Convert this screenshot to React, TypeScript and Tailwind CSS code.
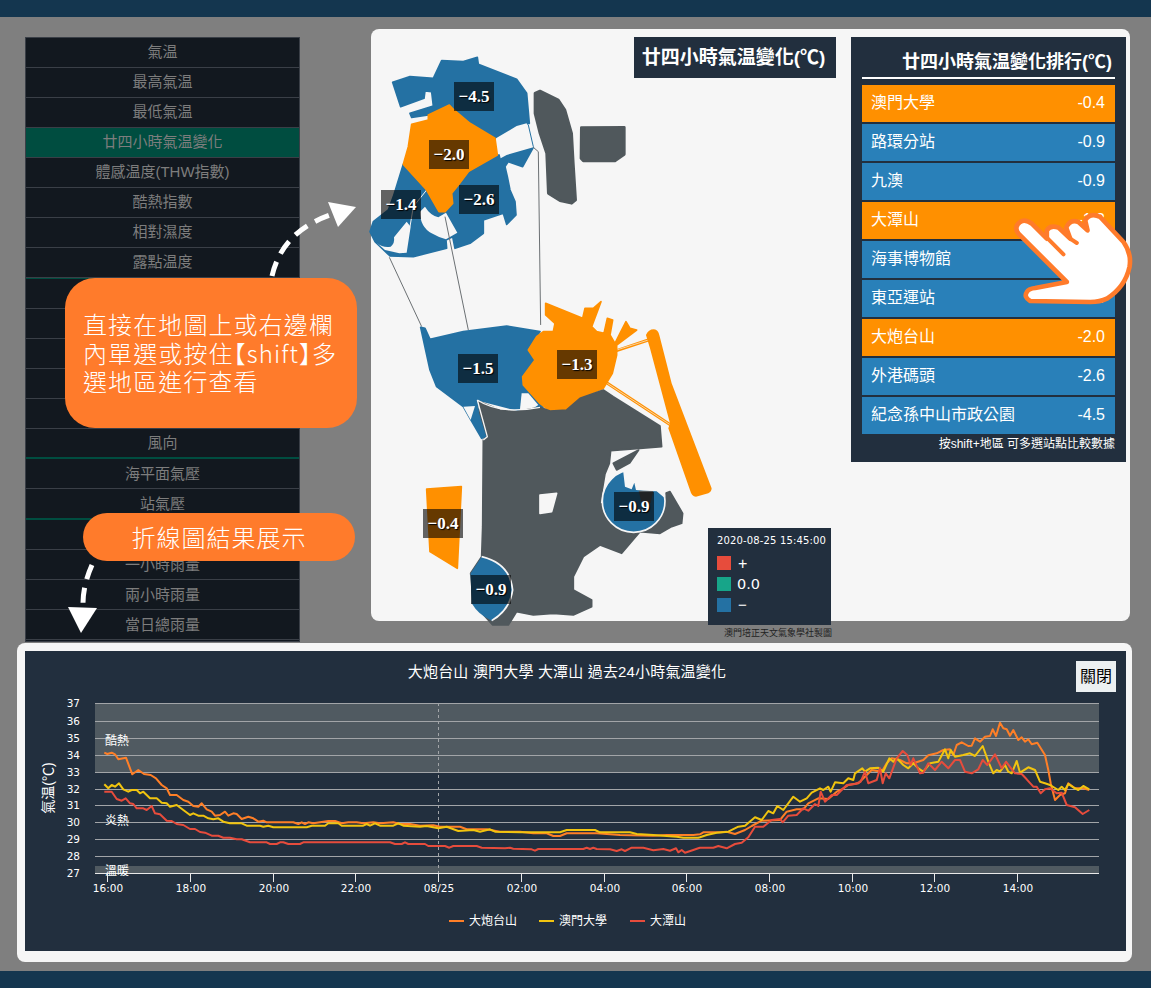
const cjk = "font-['Liberation_Sans','Noto_Sans_CJK_TC',sans-serif]";
const axisFont = "font-['DejaVu_Sans',sans-serif]";

const menuTop = ["最高氣温", "最低氣温"];
const menuMid = ["體感温度(THW指數)", "酷熱指數", "相對濕度", "露點温度"];
const rainRows = ["一小時雨量", "兩小時雨量", "當日總雨量"];

const ranking = [
  { name: "澳門大學", value: "-0.4", hot: true },
  { name: "路環分站", value: "-0.9", hot: false },
  { name: "九澳", value: "-0.9", hot: false },
  { name: "大潭山", value: "-1.3", hot: true },
  { name: "海事博物館", value: "-1.4", hot: false },
  { name: "東亞運站", value: "-1.5", hot: false },
  { name: "大炮台山", value: "-2.0", hot: true },
  { name: "外港碼頭", value: "-2.6", hot: false },
  { name: "紀念孫中山市政公園", value: "-4.5", hot: false },
];

const MenuRow = ({ label, active, lead = "leading-[28px]" }: { label?: string; active?: boolean; lead?: string }) => (
  <div className={`h-[30px] border-b border-[#3a3f47] text-center text-[15px] text-[#7d7d7d] ${lead} ${active ? "bg-[#004d40]" : ""}`}>
    {label}
  </div>
);

const Menu = () => (
  <div className={`w-[275px] h-[605px] mt-[20px] ml-[25px] shrink-0 border border-[#3a3f47] bg-[#12181f] ${cjk}`}>
    <MenuRow label="氣温" />
    {menuTop.map((m) => (
      <MenuRow key={m} label={m} />
    ))}
    <MenuRow label="廿四小時氣温變化" active />
    {menuMid.map((m) => (
      <MenuRow key={m} label={m} />
    ))}
    <div className="h-[1px] bg-[#004d40]" />
    <MenuRow />
    <MenuRow />
    <MenuRow />
    <MenuRow />
    <MenuRow />
    <div className="h-[30px] border-b-2 border-[#004d40] text-center text-[15px] leading-[28px] text-[#7d7d7d]">風向</div>
    <MenuRow label="海平面氣壓" lead="leading-[29px]" />
    <div className="h-[31px] border-b-2 border-[#004d40] text-center text-[15px] leading-[29px] text-[#7d7d7d]">站氣壓</div>
    <MenuRow />
    {rainRows.map((m) => (
      <MenuRow key={m} label={m} lead="leading-[30px]" />
    ))}
  </div>
);

const BLUE = "#2471a3";
const ORANGE = "#ff9000";
const LAND = "#50585c";
const PAPER = "#f6f6f6";

// map shapes are traced on a 3x grid, hence the scale(1/3) groups
const MapDrawing = () => (
  <svg className="absolute left-0 top-0 overflow-visible" width="759" height="592" viewBox="371 29 759 592">
    <g transform="translate(370 30) scale(0.3333)" strokeLinejoin="round" strokeWidth="5">
      <polygon
        fill={BLUE}
        stroke={BLUE}
        points="68,157 120,140 190,145 215,92 280,95 322,82 325,103 440,148 470,190 478,280 440,288 378,325 300,300 240,225 175,255 125,262 120,250 190,228 185,185 165,183 162,205 92,230"
      />
      <polygon
        fill={BLUE}
        stroke={BLUE}
        points="100,403 170,478 207,545 245,490 295,425 380,375 410,375 490,352 458,410 415,395 405,410 412,440 420,480 435,515 438,555 410,583 400,550 340,570 340,610 300,640 255,655 248,620 228,630 230,655 130,680 60,678 15,635 0,605 10,575 55,540 70,500"
      />
      <path fill={PAPER} d="M20 638 Q40 655 62 650 Q75 640 72 622 L110 575 L122 590 L110 668 L88 670 L45 660 Z" />
      <path fill={PAPER} d="M150 545 Q150 590 185 610 Q205 622 228 628 L262 608 L228 548 L205 562 Q180 555 165 530 Z" />
      <path d="M170 480 L130 530 L120 590" fill="none" stroke={PAPER} strokeWidth="3" />
      <path fill={PAPER} d="M378 325 L440 288 L470 280 L490 352 L410 375 L392 385 Z" />
      <polygon
        fill={ORANGE}
        stroke={ORANGE}
        points="238,225 252,240 300,280 375,325 382,375 295,425 265,465 245,490 248,520 225,545 207,545 170,480 100,403 115,350 125,283 175,270 175,255"
      />
      <polygon
        fill={LAND}
        stroke={LAND}
        strokeWidth="8"
        points="495,190 510,183 565,210 585,240 605,310 610,400 617,510 605,520 570,512 535,490 530,370 510,310 495,250"
      />
      <polygon fill={LAND} stroke={LAND} strokeWidth="8" points="634,293 763,292 763,373 735,393 640,393 633,385" />
      <path d="M58 682 L155 890 M225 560 L295 900 M490 352 L505 365 L512 885" stroke="#6a6f72" strokeWidth="3" fill="none" />
      <path d="M475 285 L490 350" stroke={BLUE} strokeWidth="3" fill="none" />
    </g>
    <g transform="translate(400 290) scale(0.3333)" strokeLinejoin="round" strokeWidth="5">
      <polygon
        fill={BLUE}
        stroke={BLUE}
        points="62,112 75,115 90,148 190,125 320,108 420,125 385,180 405,210 370,260 430,355 360,362 235,330 232,350 262,440 245,445 210,385 190,350 110,290 90,240"
      />
      <polygon fill={PAPER} points="365,310 385,310 415,345 395,358 360,358" />
      <polygon fill={PAPER} points="190,350 225,348 212,390" />
      <path d="M650 182 L745 150" stroke={ORANGE} strokeWidth="9" fill="none" />
      <path d="M620 278 L812 405" stroke={ORANGE} strokeWidth="9" fill="none" />
      <path d="M650 180 L745 150 M622 280 L812 405" stroke={PAPER} strokeWidth="2" fill="none" />
      <polygon
        fill={ORANGE}
        stroke={ORANGE}
        points="437,40 500,65 548,85 555,55 580,55 603,35 575,110 590,125 612,130 622,85 638,90 630,135 645,160 660,130 678,95 690,115 710,120 650,165 650,195 637,250 610,295 540,325 500,360 450,363 420,340 370,285 368,260 405,210 385,180 410,140 430,125 460,125 465,100 437,75"
      />
      <path
        fill={ORANGE}
        d="M738 135 Q745 118 762 118 Q775 120 778 135 L815 280 L935 595 Q935 605 925 610 L888 620 Q875 620 870 600 L805 415 L810 400 L750 175 Z"
      />
      <polygon
        fill={LAND}
        stroke={LAND}
        points="236,334 300,360 350,365 420,352 450,363 500,360 540,325 610,300 640,320 780,408 785,470 720,475 632,482 628,520 615,552 600,640 700,700 790,612 810,605 848,670 845,700 815,710 780,730 720,725 665,790 600,765 550,800 520,860 520,900 575,930 575,950 520,975 460,970 400,975 350,965 325,1005 278,1005 220,940 212,850 245,800 248,710 250,450 262,440 240,370"
      />
      <path d="M232 330 Q300 375 420 352 M232 330 L262 440 L250 450" stroke={PAPER} strokeWidth="4" fill="none" />
      <polygon fill={PAPER} stroke={PAPER} points="420,615 470,610 455,665 420,670" />
      <circle cx="701" cy="633" r="94" fill={BLUE} stroke={PAPER} strokeWidth="5" />
      <polygon fill={PAPER} points="668,530 675,590 695,598 703,578 708,600 730,602 770,604 795,625 800,560 730,520" />
      <polygon fill={LAND} points="716,602 760,603 752,640 725,640" />
      <polygon fill={LAND} stroke={LAND} points="716,480 640,520 650,540 690,518" />
      <path d="M245 800 Q330 820 338 900 Q330 960 275 992 Q235 975 215 940 L212 850 Z" fill={BLUE} />
      <path d="M245 800 Q330 820 338 900 Q330 960 275 992" fill="none" stroke={PAPER} strokeWidth="5" />
      <polygon fill={ORANGE} stroke={ORANGE} points="80,597 184,590 172,835 90,785" />
    </g>
  </svg>
);

const mapLabels = [
  { t: "−4.5", cls: "left-[83px] top-[53px]" },
  { t: "−2.0", cls: "left-[58px] top-[111px]" },
  { t: "−1.4", cls: "left-[10px] top-[161px]" },
  { t: "−2.6", cls: "left-[88px] top-[156px]" },
  { t: "−1.5", cls: "left-[87px] top-[325px]" },
  { t: "−1.3", cls: "left-[186px] top-[321px]" },
  { t: "−0.4", cls: "left-[52px] top-[480px]" },
  { t: "−0.9", cls: "left-[243px] top-[463px]" },
  { t: "−0.9", cls: "left-[100px] top-[546px]" },
];

const Hand = () => (
  <svg className="absolute left-[639px] top-[178px]" width="127" height="100" viewBox="480 530 380 300">
    <path
      d="M540 812 Q520 800 530 785 Q535 775 555 773 L650 755 L505 610 Q490 590 510 575 Q525 565 545 580 L590 625 L590 600 Q600 583 625 592 L660 625 L648 592 Q660 565 685 575 L712 600 L705 570 Q720 545 750 560 L820 635 Q845 670 838 710 Q825 770 770 805 Q750 815 720 815 Z"
      fill="#fff"
      stroke="#ff7b2b"
      strokeWidth="14"
      strokeLinejoin="round"
    />
    <path d="M590 622 L640 672 M660 625 L680 638" stroke="#ff7b2b" strokeWidth="12" strokeLinecap="round" />
  </svg>
);

const MapCard = () => (
  <div className="relative w-[759px] h-[592px] mt-[12px] ml-[71px] shrink-0 rounded-lg bg-[#f6f6f6] flex justify-end items-start pt-2 pr-1">
    <MapDrawing />
    {mapLabels.map((l, i) => (
      <div
        key={i}
        className={`absolute ${l.cls} w-10 h-[29px] bg-black/60 text-center text-[17px] leading-[29px] font-bold text-white font-['Liberation_Serif',serif] [text-shadow:1px_1px_1px_#000]`}
      >
        {l.t}
      </div>
    ))}
    <div className={`absolute left-[263px] top-2 w-[202px] h-[41px] bg-[#222f3e] pr-[3px] text-center text-[19px] leading-[41px] font-bold text-white whitespace-nowrap ${cjk}`}>
      廿四小時氣温變化(℃)
    </div>
    <div className="absolute left-[337px] top-[499px] w-[123px] h-[97px] bg-[#222f3e] px-[9px] pt-[7px] text-white">
      <div className="text-[10px] leading-[12px] tracking-[0.15px] font-['DejaVu_Sans',sans-serif] whitespace-nowrap">2020-08-25 15:45:00</div>
      <div className="mt-[9px] flex flex-col gap-[7px]">
        <div className="flex items-center gap-[7px] h-[14px]">
          <span className="w-[14px] h-[14px] bg-[#e74c3c]" />
          <span className="mt-[2px] text-[16px] font-['Liberation_Sans',sans-serif]">+</span>
        </div>
        <div className="flex items-center gap-[6px] h-[14px]">
          <span className="w-[14px] h-[14px] bg-[#17a589]" />
          <span className="mt-[2px] text-[14.5px] font-['DejaVu_Sans',sans-serif]">0.0</span>
        </div>
        <div className="flex items-center gap-[7px] h-[14px]">
          <span className="w-[14px] h-[14px] bg-[#2471a3]" />
          <span className="mt-[1px] text-[15px] font-['Liberation_Sans',sans-serif]">−</span>
        </div>
      </div>
    </div>
    <div className={`absolute left-[353px] top-[598px] text-[9px] leading-[12px] text-[#222] whitespace-nowrap ${cjk}`}>
      澳門培正天文氣象學社製圖
    </div>
    <div className={`relative w-[275px] h-[425px] bg-[#222f3e] px-[11px] ${cjk}`}>
      <div className="h-[42px] border-b-2 border-white pr-[3px] pt-[12px] text-right text-[18px] leading-[26px] font-bold text-white">
        廿四小時氣温變化排行(℃)
      </div>
      <div className="mt-[6px] flex flex-col gap-[2px]">
        {ranking.map((r) => (
          <div
            key={r.name}
            className={`h-[37px] flex items-center justify-between pl-[9px] pr-[10px] pb-[1px] text-[16px] text-white ${
              r.hot ? "bg-[#ff9000]" : "bg-[#2980b9]"
            }`}
          >
            <span>{r.name}</span>
            <span>{r.value}</span>
          </div>
        ))}
      </div>
      <div className="mt-[2px] whitespace-nowrap text-right text-[12px] leading-[16px] text-white">按shift+地區 可多選站點比較數據</div>
    </div>
    <Hand />
  </div>
);

const seg = (ox: number, oy: number, raw: number[]) => {
  const out: [number, number][] = [];
  for (let i = 0; i < raw.length; i += 2) out.push([ox + raw[i] / 3, oy + raw[i + 1] / 3]);
  return out;
};

const series = (a: number[], b: number[], c: number[]) =>
  [
    ...seg(20, 650, a),
    ...seg(400, 790, b).filter((p) => p[0] > 420 && p[0] < 700),
    ...seg(700, 650, c),
  ]
    .map((p) => `${p[0].toFixed(1)},${p[1].toFixed(1)}`)
    .join(" ");

const orange = series(
  [253,308,262,312,275,308,285,313,295,328,318,323,337,373,355,360,372,372,392,375,408,385,425,405,440,415,450,435,470,435,490,450,505,455,520,468,535,470,545,460,560,478,575,485,585,497,600,495,615,485,625,497,640,490,650,492,665,507,685,500,700,505,715,515,730,512,740,517,820,517,835,522,845,517,855,522,865,517,880,520,925,513,945,513,965,520,985,517,1010,517,1030,520,1060,517,1080,520,1120,517,1140,522,1170,522,1200,527],
  [0,100,30,103,60,108,100,106,120,110,180,110,200,118,260,118,300,125,360,125,400,130,440,130,460,138,480,138,500,130,590,130,660,135,760,137,800,135,850,135,880,135,900,128],
  [0,553,10,547,60,547,80,545,105,552,135,540,155,528,185,512,240,510,260,485,290,478,310,478,325,460,355,445,385,447,410,425,425,418,445,405,475,400,500,375,515,360,545,365,560,340,575,325,600,330,620,340,640,340,670,330,685,316,710,310,730,300,750,298,760,315,770,285,785,277,805,288,815,287,825,265,840,275,855,260,870,258,878,238,888,258,900,218,910,235,920,238,930,257,940,240,955,270,965,262,975,275,985,268,995,283,1012,278,1035,315,1045,360,1052,400,1065,450,1080,435,1095,430,1105,400,1125,415,1150,415,1168,420]
);

const yellow = series(
  [253,403,265,415,275,405,285,410,297,400,310,418,325,425,335,420,350,420,360,430,370,425,390,445,410,445,425,458,440,460,450,470,470,465,490,480,510,495,520,490,535,497,550,497,565,505,580,508,595,505,610,515,630,520,665,520,680,527,720,527,730,530,745,527,760,532,860,532,875,527,915,527,925,520,955,520,965,527,1030,527,1040,522,1050,527,1065,520,1080,527,1120,527,1135,520,1150,527,1200,530],
  [0,100,20,107,50,112,80,108,115,115,140,110,175,123,220,120,240,125,270,118,285,125,360,127,480,127,500,120,585,120,600,127,690,127,710,132,760,135,830,140,850,143,895,143],
  [0,562,20,555,50,548,85,545,115,530,135,527,165,502,185,510,205,483,220,490,232,468,250,480,280,440,300,455,320,445,335,428,360,415,370,420,385,410,392,425,405,397,430,400,445,385,460,390,465,370,487,355,495,365,510,355,535,353,550,365,568,325,580,335,590,325,610,345,625,355,640,340,655,355,670,365,690,340,715,335,735,298,745,325,752,300,765,320,790,315,810,310,825,318,848,288,865,335,880,370,890,360,900,365,915,345,925,365,935,370,950,333,960,368,985,352,1005,360,1020,395,1035,400,1050,405,1075,420,1085,410,1095,420,1105,402,1120,412,1135,420,1150,408,1168,418]
);

const red = series(
  [253,425,275,425,290,447,305,452,317,445,330,460,340,462,350,475,370,475,380,480,395,468,405,490,420,493,440,512,455,513,470,522,490,525,510,537,525,537,540,546,555,548,575,557,595,557,610,563,630,563,650,568,665,568,690,577,740,577,750,582,770,582,780,577,790,577,805,582,840,582,850,577,1110,577,1125,582,1145,582,1155,577,1165,582,1200,582],
  [0,160,15,158,75,162,85,168,135,168,148,173,160,168,230,168,245,173,315,175,330,173,340,176,395,178,405,182,415,177,550,177,560,173,570,177,580,173,590,177,630,178,650,183,665,178,675,183,695,173,730,173,760,181,790,177,810,182,828,175,835,187,845,180,855,188,880,180,895,175],
  [0,593,40,593,55,588,80,595,105,582,125,578,145,562,165,530,190,530,215,510,240,507,248,517,265,497,290,495,310,475,325,482,345,462,355,468,362,425,375,455,395,435,410,435,440,405,465,402,482,395,495,365,505,400,530,390,540,355,548,400,557,370,568,385,590,325,608,303,622,315,632,345,640,325,660,370,670,368,685,340,705,360,725,335,745,355,765,330,780,330,795,365,815,370,835,358,848,330,862,345,885,313,905,355,918,335,945,370,965,372,980,388,1000,410,1010,410,1022,430,1035,418,1050,415,1070,430,1085,428,1100,465,1125,472,1148,492,1168,480]
);

const yTicks = [
  [37, 703], [36, 721], [35, 738], [34, 755], [33, 772], [32, 789],
  [31, 805], [30, 822], [29, 839], [28, 856], [27, 873],
];
const xTicks = [
  ["16:00", 107], ["18:00", 190], ["20:00", 273], ["22:00", 355], ["08/25", 438], ["02:00", 521],
  ["04:00", 604], ["06:00", 686], ["08:00", 769], ["10:00", 852], ["12:00", 934], ["14:00", 1017],
] as const;

const legend = [
  { name: "大炮台山", c: "#ff7f27", x: 449 },
  { name: "澳門大學", c: "#f1c40f", x: 539 },
  { name: "大潭山", c: "#e74c3c", x: 630 },
];

const Chart = () => (
  <svg className={`block w-full h-full fill-white ${cjk}`} viewBox="25 651 1101 300">
    <text x="567" y="677" textAnchor="middle" fontSize="15" letterSpacing="0.17">大炮台山 澳門大學 大潭山 過去24小時氣温變化</text>
    <rect x="95" y="703" width="1004" height="69" fill="#505a61" />
    <rect x="95" y="866" width="1004" height="7" fill="#505a61" />
    {yTicks.map(([v, y]) => (
      <g key={v}>
        <line x1="95" x2="1099" y1={y + 0.5} y2={y + 0.5} stroke={v === 27 ? "#e8e8e8" : "#a2a5a8"} />
        <text x="80" y={y + 4} textAnchor="end" fontSize="10.5" className={axisFont}>{v}</text>
      </g>
    ))}
    <line x1="438.5" x2="438.5" y1="703" y2="873" stroke="#a2a5a8" strokeDasharray="3 3" />
    {xTicks.map(([t, x]) => (
      <g key={t}>
        <line x1={x + 0.5} x2={x + 0.5} y1="873" y2="882" stroke="#e8e8e8" />
        <text x={x + 1} y="892" textAnchor="middle" fontSize="10.5" className={axisFont}>{t}</text>
      </g>
    ))}
    <text transform="translate(53 788) rotate(-90)" textAnchor="middle" fontSize="14">氣温(℃)</text>
    <text x="105" y="745" fontSize="12">酷熱</text>
    <text x="105" y="825" fontSize="12">炎熱</text>
    <text x="105" y="875" fontSize="12">溫暖</text>
    <polyline points={orange} fill="none" stroke="#ff7f27" strokeWidth="2" strokeLinejoin="round" />
    <polyline points={yellow} fill="none" stroke="#f1c40f" strokeWidth="2" strokeLinejoin="round" />
    <polyline points={red} fill="none" stroke="#e74c3c" strokeWidth="2" strokeLinejoin="round" />
    {legend.map((l) => (
      <g key={l.name}>
        <line x1={l.x} x2={l.x + 15} y1="921" y2="921" stroke={l.c} strokeWidth="2" />
        <text x={l.x + 20} y="925" fontSize="12">{l.name}</text>
      </g>
    ))}
  </svg>
);

const ChartCard = () => (
  <div className="w-[1115px] h-[319px] ml-[17px] shrink-0 rounded-lg bg-[#f6f6f6] pt-2 pl-2 pr-[6px] pb-[11px]">
    <div className="relative w-[1101px] h-[300px] bg-[#222f3e]">
      <Chart />
      <button className={`absolute right-[10px] top-[10px] w-10 h-[31px] bg-[#ecf0f1] text-[16px] text-black ${cjk}`}>關閉</button>
    </div>
  </div>
);

const Callouts = () => (
  <>
    <div className="absolute left-[65px] top-[278px] w-[292px] h-[150px] rounded-[30px] bg-[#ff7b2b] pl-[18px] pt-[32px] text-[24px] leading-[28.5px] tracking-[1.1px] font-light text-white font-['Noto_Sans_CJK_TC',sans-serif] whitespace-nowrap">
      直接在地圖上或右邊欄
      <br />
      內單選或按住<span className="[font-feature-settings:'halt']">【</span>shift<span className="[font-feature-settings:'halt']">】</span>多
      <br />
      選地區進行查看
    </div>
    <div className="absolute left-[83px] top-[513px] w-[272px] h-[48px] rounded-full bg-[#ff7b2b] text-center text-[24px] leading-[47px] tracking-[1px] font-light text-white font-['Noto_Sans_CJK_TC',sans-serif]">
      折線圖結果展示
    </div>
    <svg className="absolute left-0 top-0 pointer-events-none" width="400" height="650" viewBox="0 0 400 650">
      <path d="M272 276 Q282 232 330 215" fill="none" stroke="#fff" strokeWidth="5" strokeDasharray="15 9" />
      <polygon points="328,202 356,207 338,227" fill="#fff" />
      <path d="M92 565 Q83 585 83 604" fill="none" stroke="#fff" strokeWidth="5" strokeDasharray="15 9" />
      <polygon points="68,607 97,608 81,633" fill="#fff" />
    </svg>
  </>
);

export default function App() {
  return (
    <div className="relative w-[1151px] h-[988px] overflow-hidden flex flex-col bg-[#7f7f7f]">
      <div className="h-[17px] shrink-0 bg-[#14364f]" />
      <div className="h-[626px] shrink-0 flex items-start">
        <Menu />
        <MapCard />
      </div>
      <ChartCard />
      <div className="mt-auto h-[17px] shrink-0 bg-[#14364f]" />
      <Callouts />
    </div>
  );
}
